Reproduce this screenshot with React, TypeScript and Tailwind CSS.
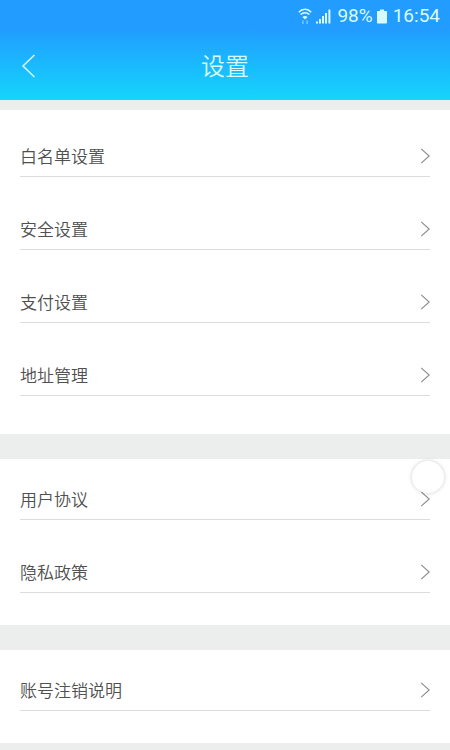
const groups = [
    {
        id: "account",
        className: "pt-1.5 pb-[38px]",
        items: ["白名单设置", "安全设置", "支付设置", "地址管理"],
    },
    {
        id: "legal",
        className: "pb-8",
        items: ["用户协议", "隐私政策"],
    },
    {
        id: "cancel",
        className: "pb-8",
        items: ["账号注销说明"],
    },
]

function WifiIcon() {
    return (
        <svg width="14" height="17" viewBox="0 0 14 17" fill="none" stroke="currentColor" strokeWidth="1.5" aria-hidden="true">
            <path d="M0.8 4.2C4.2 0.4 9.8 0.4 13.2 4.2" />
            <path d="M2.6 6.6C5 4 9 4 11.4 6.6" />
            <path d="M4.4 9C5.8 7.6 8.2 7.6 9.6 9L7 11.4Z" fill="currentColor" stroke="none" />
            <path d="M4.9 16V12.4M9.1 12.4V16" strokeWidth="1.6" opacity="0.45" />
        </svg>
    )
}

function SignalIcon() {
    return (
        <svg width="15" height="15" viewBox="0 0 15 15" fill="currentColor" aria-hidden="true">
            <rect x="0" y="12.5" width="2" height="2" />
            <rect x="3" y="10" width="2" height="4.5" />
            <rect x="6" y="7" width="2" height="7.5" />
            <rect x="9" y="4" width="2" height="10.5" />
            <rect x="12.4" y="0.5" width="2" height="14" />
        </svg>
    )
}

function BatteryIcon() {
    return (
        <svg width="10" height="15" viewBox="0 0 10 15" fill="currentColor" aria-hidden="true">
            <path d="M3 0.5H7V2H9.2Q10 2 10 2.8V13.7Q10 14.5 9.2 14.5H0.8Q0 14.5 0 13.7V2.8Q0 2 0.8 2H3Z" />
        </svg>
    )
}

function SettingRow({ label }: { label: string }) {
    return (
        <li>
            <a href="#" className="flex h-[61px] items-end border-b border-[#dcdcdc]">
                <span className="flex h-10 flex-1 items-center justify-between">
                    <span className="pt-1">{label}</span>
                    <svg width="10" height="16" viewBox="0 0 10 16" fill="none" stroke="#8a8a8a" strokeWidth="1.1" aria-hidden="true">
                        <path d="M1.2 0.8L9.2 8L1.2 15.2" />
                    </svg>
                </span>
            </a>
        </li>
    )
}

export default function App() {
    return (
        <div className="relative min-h-screen bg-[#eceeed] font-['Roboto','Noto_Sans_CJK_SC',sans-serif] text-[#505050]">
            <header className="bg-linear-to-b from-[#229dff] from-30% to-[#16d5fb] text-[#d8fbff]">
                {/* Status bar */}
                <div className="flex h-8 items-center justify-end pr-2.5 text-[19px]">
                    <WifiIcon />
                    <span className="ml-1">
                        <SignalIcon />
                    </span>
                    <span className="ml-1.5">98%</span>
                    <span className="ml-1">
                        <BatteryIcon />
                    </span>
                    <span className="ml-1.5">16:54</span>
                </div>
                {/* Title bar */}
                <div className="grid h-[68px] grid-cols-[1fr_auto_1fr] items-center px-5">
                    <button type="button" aria-label="返回" className="flex h-10 w-10 items-center">
                        <svg width="16" height="24" viewBox="0 0 16 24" fill="none" stroke="currentColor" strokeWidth="1.5" aria-hidden="true">
                            <path d="M14.4 1L3 12L14.4 23" />
                        </svg>
                    </button>
                    <h1 className="pt-0.5 text-2xl font-[350]">设置</h1>
                </div>
            </header>

            <main className="flex flex-col gap-[25px] pt-2.5">
                {groups.map((g) => (
                    <section key={g.id} className={`bg-white px-5 ${g.className}`}>
                        <ul className="flex flex-col gap-3 text-[17px] font-[350]">
                            {g.items.map((label) => (
                                <SettingRow key={label} label={label} />
                            ))}
                        </ul>
                    </section>
                ))}
            </main>

            {/* Floating assist button */}
            <button
                type="button"
                aria-label="悬浮按钮"
                className="absolute top-[461px] right-1.5 h-8 w-8 rounded-full bg-white shadow-[0_0_4px_rgba(0,0,0,0.2)]"
            />
        </div>
    )
}
